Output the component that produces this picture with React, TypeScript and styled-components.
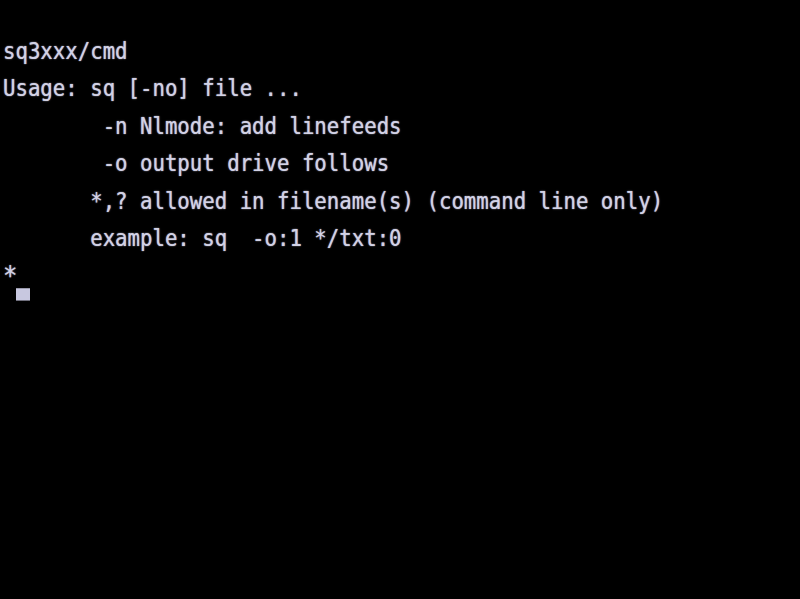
import React from "react";
import styled, { createGlobalStyle } from "styled-components";

const Global = createGlobalStyle`
  html, body { margin: 0; padding: 0; background: #000; }
  #root { width: 800px; height: 599px; }
`;

const Screen = styled.div`
  width: 800px;
  height: 599px;
  background: #000;
  box-sizing: border-box;
  padding-top: 33px;
  padding-left: 3px;
  overflow: hidden;
  display: flex;
  flex-direction: column;
`;

const Line = styled.div`
  height: 37.44px;
  line-height: 37.44px;
  font-family: "DejaVu Sans Mono", "Liberation Mono", monospace;
  font-size: 20.7px;
  color: #d2d2e6;
  white-space: pre;
  transform: scaleY(1.12);
  text-shadow: 0 0 1px rgba(210, 210, 230, 0.8), 0 0 2px rgba(210, 210, 230, 0.3);
`;

const Prompt = styled.span`
  display: inline-block;
  font-size: 24px;
  width: 12.5px;
  vertical-align: 0px;
`;

const Cursor = styled.span`
  display: inline-block;
  width: 14px;
  height: 11px;
  background: #c8c8e0;
  vertical-align: -14px;
`;

const lines = [
  "sq3xxx/cmd",
  "Usage: sq [-no] file ...",
  "        -n Nlmode: add linefeeds",
  "        -o output drive follows",
  "       *,? allowed in filename(s) (command line only)",
  "       example: sq  -o:1 */txt:0",
];

export default function App() {
  return (
    <>
      <Global />
      <Screen>
        {lines.map((l, i) => (
          <Line key={i}>{l}</Line>
        ))}
        <Line>
          <Prompt>*</Prompt>
          <Cursor />
        </Line>
      </Screen>
    </>
  );
}
